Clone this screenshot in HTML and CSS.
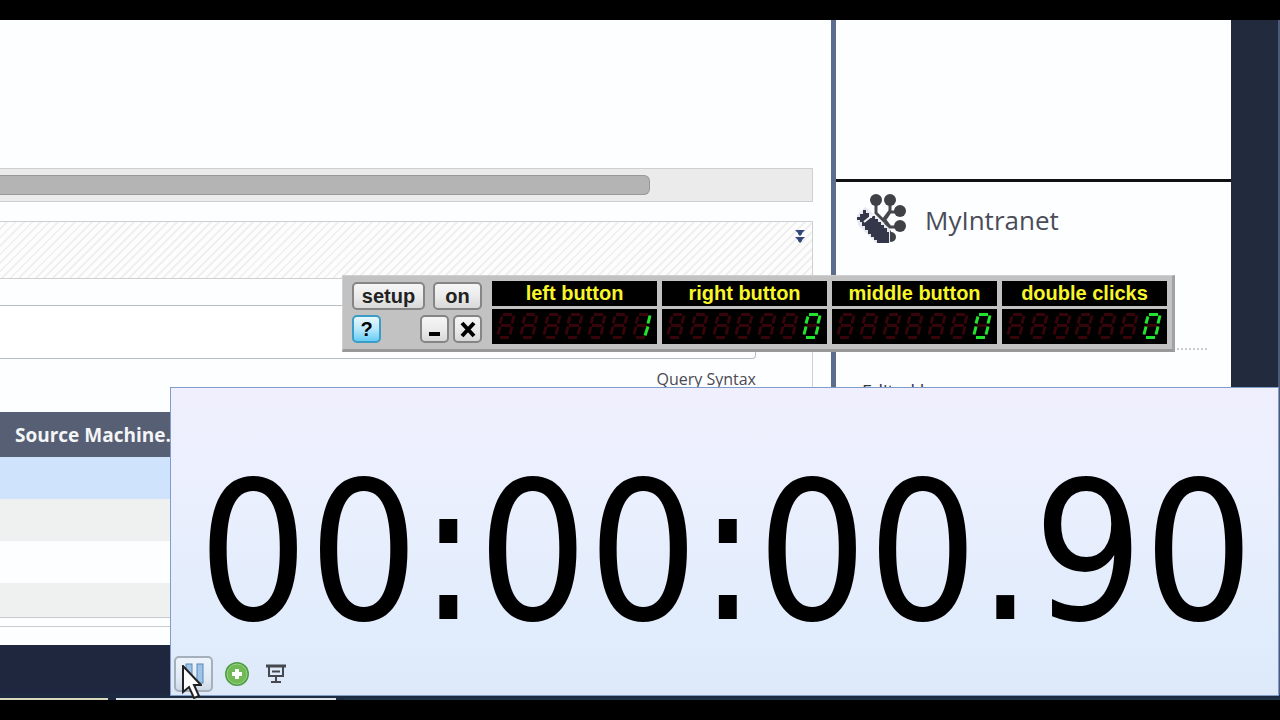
FILE: index.html
```
<!DOCTYPE html>
<html lang="en">
<head>
<meta charset="utf-8">
<title>MyIntranet</title>
<link rel="stylesheet" href="styles.css">
</head>
<body>
<svg class="defs" width="0" height="0" aria-hidden="true">
  <defs>
    <g id="seg-outer">
      <path d="M6 2H15M5 4L3 11M17 3L15 11M3 14L1 22M15 14L13 22M3 25H12"/>
    </g>
    <g id="seg-all"><use href="#seg-outer"/><path d="M4 13H14"/></g>
    <g id="seg-one"><path d="M17 3L15 11M15 14L12 23"/></g>
    <g id="ghosts">
      <use href="#seg-all" x="5"/><use href="#seg-all" x="28"/><use href="#seg-all" x="51"/>
      <use href="#seg-all" x="73"/><use href="#seg-all" x="96"/><use href="#seg-all" x="118"/>
      <use href="#seg-all" x="141"/>
    </g>
  </defs>
</svg>
<div class="screen">
  <main class="desktop">
    <section class="content">
      <div class="scroll-track"><div class="scroll-thumb"></div></div>
      <div class="query">
        <div class="query-head">
          <button class="expand" aria-label="Expand">
            <svg width="12" height="14" viewBox="0 0 12 14"><path d="M1 1H11L8 4V5L6 7L4 5V4ZM1 8H11L8 11V12L6 14L4 12V11Z" fill="#36477b"/></svg>
          </button>
        </div>
        <input class="query-input" type="text" aria-label="Query">
        <a class="syntax" href="#">Query Syntax</a>
      </div>
      <table class="machines">
        <thead><tr><th>Source Machine...</th></tr></thead>
        <tbody>
          <tr class="selected"><td></td></tr>
          <tr class="alt"><td></td></tr>
          <tr><td></td></tr>
          <tr class="alt last"><td></td></tr>
        </tbody>
      </table>
      <div class="pager"></div>
      <div class="page-foot"></div>
    </section>
    <aside class="side">
      <div class="side-top"></div>
      <div class="side-body">
        <h1 class="brand">
          <svg width="50" height="50" viewBox="0 0 50 50" aria-hidden="true">
            <g stroke="#46484f" stroke-width="3" fill="none"><path d="M19 6V18L27 26L33 17H44M33 6V16L27 24M27 24L33 32H44M28 28L35 42"/></g>
            <g fill="#3f4147"><circle cx="19" cy="5" r="6"/><circle cx="33" cy="5" r="6"/><circle cx="43" cy="16" r="6"/><circle cx="43" cy="31" r="6"/><circle cx="34" cy="42" r="5"/></g>
            <path d="M8 12L12 15L33 34V48H19L1 30L0 20Z" fill="#e8e8ee"/>
            <path d="M0 22H3V19H6V15H9V18H12V23H15V21H18V24H21V27H24V30H27V33H30V37H32V48H20V45H17V42H14V39H11V35H8V31H5V27H3V25H0Z" fill="#34374a"/>
            <path d="M7 27L17 19" stroke="#f5f5f8" stroke-width="2"/>
          </svg>
          <span>MyIntranet</span>
        </h1>
        <p class="edited">Edited by</p>
      </div>
    </aside>
    <div class="gutter"></div>
  </main>
  <div class="taskbar"><span class="task-a"></span><span class="task-b"></span><span class="task-c"></span></div>

  <section class="clicker" aria-label="Click counter">
    <div class="controls">
      <div class="control-row"><button class="btn setup">setup</button><button class="btn on">on</button></div>
      <div class="control-row">
        <button class="btn small help">?</button>
        <span class="spacer"></span>
        <button class="btn small" aria-label="Minimize"><svg width="24" height="22" viewBox="0 0 24 22"><path d="M6 16H17" stroke="#000" stroke-width="4"/></svg></button>
        <button class="btn small" aria-label="Close"><svg width="24" height="22" viewBox="0 0 24 22"><path d="M6 5L18 18M18 5L6 18" stroke="#000" stroke-width="4"/></svg></button>
      </div>
    </div>
    <div class="counter"><h2>left button</h2>
      <svg class="lcd" viewBox="0 0 165 34" role="img" aria-label="1"><g transform="translate(0 3)"><use class="dim" href="#ghosts"/><use class="lit" href="#seg-one" x="141"/></g></svg></div>
    <div class="counter"><h2>right button</h2>
      <svg class="lcd" viewBox="0 0 165 34" role="img" aria-label="0"><g transform="translate(0 3)"><use class="dim" href="#ghosts"/><use class="lit" href="#seg-outer" x="141"/></g></svg></div>
    <div class="counter"><h2>middle button</h2>
      <svg class="lcd" viewBox="0 0 165 34" role="img" aria-label="0"><g transform="translate(0 3)"><use class="dim" href="#ghosts"/><use class="lit" href="#seg-outer" x="141"/></g></svg></div>
    <div class="counter"><h2>double clicks</h2>
      <svg class="lcd" viewBox="0 0 165 34" role="img" aria-label="0"><g transform="translate(0 3)"><use class="dim" href="#ghosts"/><use class="lit" href="#seg-outer" x="141"/></g></svg></div>
  </section>

  <section class="timer" aria-label="Timer">
    <div class="time">00:00:00.90</div>
    <div class="tools">
      <button class="tool active" aria-label="Pause">
        <svg width="20" height="22" viewBox="0 0 20 22"><g fill="#9cc4e8" stroke="#5d88b4"><rect x="2" y="1" width="6" height="19"/><rect x="13" y="1" width="6" height="19"/></g></svg>
      </button>
      <button class="tool" aria-label="Add">
        <svg width="26" height="26" viewBox="0 0 26 26"><circle cx="13" cy="13" r="12" fill="#4f9d43"/><circle cx="13" cy="13" r="10" fill="#70b955" stroke="#9bd389" stroke-width="1"/><path d="M13 8V18M8 13H18" stroke="#fff" stroke-width="4"/></svg>
      </button>
      <button class="tool" aria-label="Presentation">
        <svg width="20" height="20" viewBox="0 0 20 20" fill="none" stroke="#45484f"><path d="M0 2H20" stroke-width="3"/><path d="M3 3V12H17V3M6 7.5H14M10 12V18M5 18H15" stroke-width="2"/></svg>
      </button>
    </div>
    <svg class="pointer" width="20" height="34" viewBox="0 0 20 34" aria-hidden="true"><path d="M1 1V27L7 22L12 33L17 31L12 20H19Z" fill="#fff" stroke="#222" stroke-width="2"/></svg>
  </section>
</div>
</body>
</html>
```
FILE: styles.css
```
* { box-sizing: border-box; }
body {
  margin: 0;
  min-height: 100vh;
  padding: 20px 0;
  background: #000;
  font-family: "Open Sans", "Noto Sans", sans-serif;
  overflow: hidden;
}
button { margin: 0; padding: 0; border: 0; background: none; font: inherit; }
h1, h2, p { margin: 0; }
.defs { position: absolute; }
.screen {
  position: relative;
  display: flex;
  flex-direction: column;
  min-height: calc(100vh - 40px);
  background: #fdfeff;
}
.desktop { display: flex; flex: 1; }

.content {
  flex: 1;
  display: flex;
  flex-direction: column;
  padding-top: 148px;
  border-right: 5px solid #5d6d8d;
}
.scroll-track {
  height: 34px;
  margin-right: 18px;
  padding: 6px 0;
  border: 1px solid #cfcfcf;
  border-left: 0;
  background: #ebebeb;
}
.scroll-thumb {
  width: 80%;
  height: 20px;
  border: 1px solid #999;
  border-left: 0;
  border-radius: 0 6px 6px 0;
  background: #b4b4b4;
}
.query {
  display: flex;
  flex-direction: column;
  height: 191px;
  margin: 19px 18px 0 0;
  border: 1px solid #cfcfcf;
  border-width: 1px 1px 0 0;
}
.query-head {
  display: flex;
  justify-content: flex-end;
  align-items: flex-start;
  height: 57px;
  padding: 7px 6px;
  border-bottom: 1px solid #d0d0d0;
  background: repeating-linear-gradient(135deg, #fdfdfd 0 4px, #f0f0f0 4px 6px);
}
.expand { display: flex; }
.query-input {
  height: 54px;
  margin: 26px 56px 0 0;
  border: 1px solid #b9bcc2;
  border-left: 0;
  border-radius: 0 4px 4px 0;
  background: #fff;
}
.syntax {
  align-self: flex-end;
  margin: 8px 56px 0 0;
  color: #4a4a50;
  font-size: 16px;
  line-height: 24px;
  text-decoration: none;
}
.machines { width: 100%; border-collapse: collapse; }
.machines th {
  height: 45px;
  padding: 0 0 0 15px;
  background: #565f74;
  color: #f4f5f7;
  font-size: 19px;
  font-weight: 700;
  line-height: 28px;
  text-align: left;
}
.machines td { height: 42px; padding: 0; }
.machines .selected td { background: #d0e3fd; }
.machines .alt td { background: #eff0f0; }
.machines .last td { height: 34px; border-bottom: 1px solid #c9c9c9; }
.pager { height: 19px; margin-top: 8px; border-top: 1px solid #ccc; }
.page-foot { flex: 1; background: #1e273e; }

.side { width: 395px; }
.side-top { height: 162px; border-bottom: 3px solid #111; }
.side-body { padding: 13px 24px 0 21px; }
.brand {
  display: flex;
  align-items: center;
  gap: 18px;
  color: #4a4c58;
  font-size: 26px;
  font-weight: 400;
  line-height: 50px;
}
.brand svg { overflow: visible; }
.edited {
  margin-top: 103px;
  padding: 31px 0 0 5px;
  border-top: 2px dotted #ccc;
  color: #35363b;
  font-size: 18px;
  line-height: 20px;
}
.gutter { width: 49px; background: #222a3e; border-right: 2px solid #4c5a79; }
.taskbar {
  display: flex;
  height: 5px;
  padding-top: 3px;
  background: #1c2b42;
  gap: 8px;
}
.task-a { width: 108px; background: #d9d9bd; }
.task-b { width: 220px; background: #dce3e6; }
.task-c { flex: 1; background: #1d3446; }

.clicker {
  position: absolute;
  left: 342px;
  top: 255px;
  display: flex;
  gap: 5px;
  padding: 5px 5px 5px 9px;
  border: 1px solid #d0d0d0;
  border-right: 3px solid #a2a2a2;
  border-bottom: 3px solid #989898;
  background: #c2c2c2;
  font-family: "Liberation Sans", Arial, sans-serif;
}
.controls { display: flex; flex-direction: column; gap: 3px; width: 130px; margin-right: 5px; }
.control-row { display: flex; gap: 4px; height: 30px; align-items: center; }
.control-row .spacer { flex: 1; }
.btn {
  display: flex;
  align-items: center;
  justify-content: center;
  height: 28px;
  border: 2px solid #858585;
  border-radius: 5px;
  background: linear-gradient(#f6f6f6, #ebebeb 50%, #d8d8d8);
  color: #222;
  font-size: 20px;
  font-weight: 700;
  line-height: 22px;
}
.setup { width: 73px; }
.on { width: 49px; margin-left: 4px; }
.small { width: 29px; color: #000; }
.small svg { flex: none; }
.help {
  border-color: #3b9cc5;
  background: linear-gradient(#e8f8ff, #b9e8fc 50%, #66ccf5);
}
.counter { display: flex; flex-direction: column; gap: 3px; width: 165px; }
.counter h2 {
  background: #000;
  color: #f6f62a;
  font-size: 20px;
  font-weight: 700;
  line-height: 25px;
  text-align: center;
}
.lcd { display: block; width: 100%; height: 35px; background: #000; }
.dim { fill: none; stroke: #360409; stroke-width: 3; }
.lit { fill: none; stroke: #20e42e; stroke-width: 3; }

.timer {
  position: absolute;
  left: 170px;
  right: 1px;
  top: 367px;
  bottom: 4px;
  display: flex;
  flex-direction: column;
  justify-content: space-between;
  padding: 65px 0 3px 3px;
  border: 1px solid #7f9dc8;
  background: linear-gradient(#efeffd, #ecf0fe 30%, #e4edfc 60%, #e0ecfc 84%, #dde8f9);
}
.time {
  color: #000;
  font-family: "DejaVu Sans Condensed", "DejaVu Sans", sans-serif;
  font-size: 193px;
  line-height: 200px;
  text-align: center;
  white-space: nowrap;
}
.tools { display: flex; align-items: center; gap: 8px; }
.tool { display: flex; align-items: center; justify-content: center; width: 31px; height: 36px; }
.active {
  width: 39px;
  border: 2px solid #a6b0bd;
  border-radius: 5px;
  background: linear-gradient(#edf3fa, #e2ebf6 60%, #cfd9e5);
}
.pointer { position: absolute; left: 11px; bottom: -4px; }
```
